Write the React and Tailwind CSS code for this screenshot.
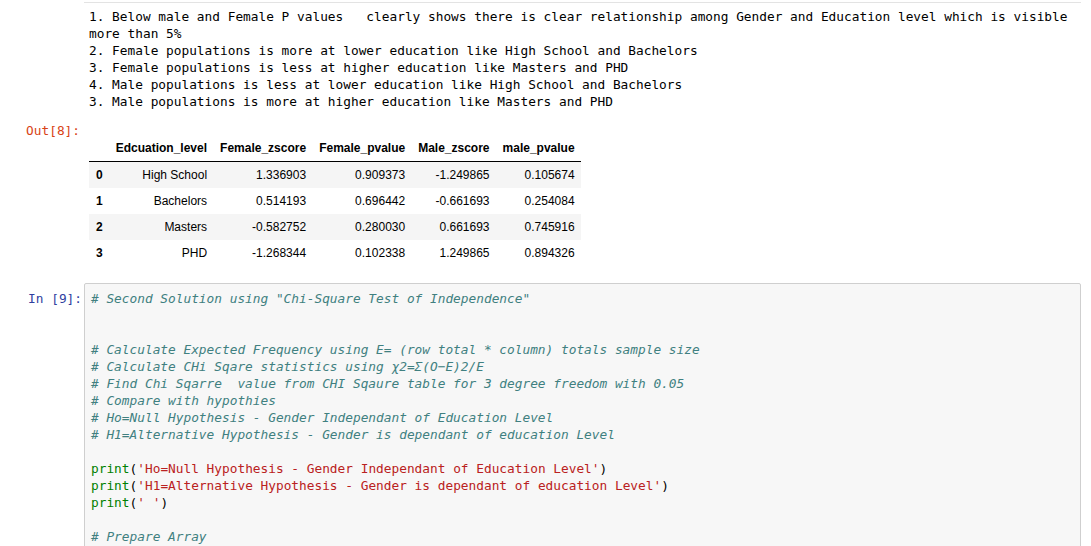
const mono = "font-['DejaVu_Sans_Mono','Liberation_Mono',monospace] text-[12.8px] leading-[17px]";

const notes = [
  "1. Below male and Female P values   clearly shows there is clear relationship among Gender and Education level which is visible",
  "more than 5%",
  "2. Female populations is more at lower education like High School and Bachelors",
  "3. Female populations is less at higher education like Masters and PHD",
  "4. Male populations is less at lower education like High School and Bachelors",
  "3. Male populations is more at higher education like Masters and PHD",
];

const rows = [
  ["0", "High School", "1.336903", "0.909373", "-1.249865", "0.105674"],
  ["1", "Bachelors", "0.514193", "0.696442", "-0.661693", "0.254084"],
  ["2", "Masters", "-0.582752", "0.280030", "0.661693", "0.745916"],
  ["3", "PHD", "-1.268344", "0.102338", "1.249865", "0.894326"],
];

const headers = ["Edcuation_level", "Female_zscore", "Female_pvalue", "Male_zscore", "male_pvalue"];

function Comment({ children }) {
  return <div className="italic text-[#408080]">{children}</div>;
}

function Print({ str }) {
  return (
    <div>
      <span className="text-[#008000]">print</span>(
      <span className="text-[#ba2121]">'{str}'</span>)
    </div>
  );
}

export default function App() {
  return (
    <div className="min-h-screen w-full bg-white text-black">
      <div className="w-[1081px]">
        {/* MARKDOWN CELL */}
        <div className="ml-[84px] mt-[2px] border-t border-[#e3e3e3]" />
        <div className={`pl-[89px] pt-[5px] ${mono} whitespace-pre`}>
          {notes.map((l, i) => (
            <div key={i}>{l}</div>
          ))}
        </div>

        {/* OUTPUT */}
        <div className="mt-[12px] flex">
          <div className={`w-[84px] shrink-0 pr-[4px] text-right text-[#d84315] ${mono}`}>
            Out[8]:
          </div>
          <div className="pt-[13px] pl-[5px]">
            <table className="border-collapse font-['Liberation_Sans',Arial,sans-serif] text-[12px] leading-[14px]">
              <thead>
                <tr className="border-b border-black">
                  <th className="pl-[7px] pr-[6px] py-[6px]"></th>
                  {headers.map((h) => (
                    <th key={h} className="pl-[7px] pr-[6px] py-[6px] text-right font-bold">
                      {h}
                    </th>
                  ))}
                </tr>
              </thead>
              <tbody>
                {rows.map((r, i) => (
                  <tr key={r[0]} className={i % 2 === 0 ? "bg-[#f5f5f5]" : ""}>
                    <th className="pl-[7px] pr-[6px] py-[6px] text-left font-bold">{r[0]}</th>
                    {r.slice(1).map((c, j) => (
                      <td key={j} className="pl-[7px] pr-[6px] py-[6px] text-right">
                        {c}
                      </td>
                    ))}
                  </tr>
                ))}
              </tbody>
            </table>
          </div>
        </div>

        {/* CODE CELL */}
        <div className="mt-[17px] flex">
          <div className={`w-[84px] shrink-0 pt-[7px] pr-[2px] text-right text-[#303f9f] ${mono}`}>
            In [9]:
          </div>
          <div className={`flex-1 rounded-[2px] border border-[#cfcfcf] bg-[#f7f7f7] px-[6px] pt-[6px] pb-[40px] ${mono} whitespace-pre`}>
            <Comment># Second Solution using "Chi-Square Test of Independence"</Comment>
            <div>&nbsp;</div>
            <div>&nbsp;</div>
            <Comment># Calculate Expected Frequency using E= (row total * column) totals sample size</Comment>
            <Comment># Calculate CHi Sqare statistics using χ2=Σ(O−E)2/E</Comment>
            <Comment># Find Chi Sqarre  value from CHI Sqaure table for 3 degree freedom with 0.05</Comment>
            <Comment># Compare with hypothies</Comment>
            <Comment># Ho=Null Hypothesis - Gender Independant of Education Level</Comment>
            <Comment># H1=Alternative Hypothesis - Gender is dependant of education Level</Comment>
            <div>&nbsp;</div>
            <Print str="Ho=Null Hypothesis - Gender Independant of Education Level" />
            <Print str="H1=Alternative Hypothesis - Gender is dependant of education Level" />
            <Print str=" " />
            <div>&nbsp;</div>
            <Comment># Prepare Array</Comment>
          </div>
        </div>
      </div>
    </div>
  );
}
